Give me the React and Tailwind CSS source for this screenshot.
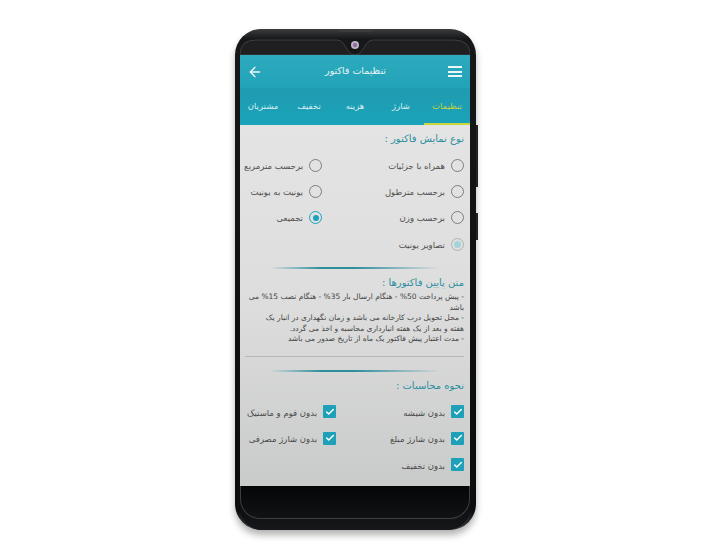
import React from "react";
import { ArrowLeft, Check } from "lucide-react";

const tabs = ["تنظیمات", "شارژ", "هزینه", "تخفیف", "مشتریان"];

const radios = [
  { label: "همراه با جزئیات" },
  { label: "برحسب مترمربع" },
  { label: "برحسب مترطول" },
  { label: "یونیت به یونیت" },
  { label: "برحسب وزن" },
  { label: "تجمیعی", checked: true },
  { label: "تصاویر یونیت", disabled: true },
];

const checks = [
  "بدون شیشه",
  "بدون فوم و ماستیک",
  "بدون شارژ مبلغ",
  "بدون شارژ مصرفی",
  "بدون تخفیف",
];

function Radio({ label, checked, disabled }) {
  return (
    <div className="flex h-[26.3px] items-center gap-[6px]">
      <span
        className={
          "flex h-[13px] w-[13px] shrink-0 items-center justify-center rounded-full border-[1.5px] " +
          (checked ? "border-[#1aa3bb]" : disabled ? "border-[#a9b5b6]" : "border-[#7d7f7f]")
        }
      >
        {checked && <span className="h-[6px] w-[6px] rounded-full bg-[#1aa3bb]" />}
        {disabled && <span className="h-[7px] w-[7px] rounded-full bg-[#a6d3db]" />}
      </span>
      <span className="pt-[2px] text-[8.5px] whitespace-nowrap text-[#4f4f4f]">{label}</span>
    </div>
  );
}

function CheckRow({ label }) {
  return (
    <div className="flex h-[26.5px] items-center gap-[6px]">
      <span className="flex h-[13px] w-[13px] shrink-0 items-center justify-center rounded-[1px] bg-[#1ea0b9]">
        <Check size={10} strokeWidth={3.5} className="text-white" />
      </span>
      <span className="pt-[2px] text-[8.5px] whitespace-nowrap text-[#4a4a4a]">{label}</span>
    </div>
  );
}

function Divider() {
  return <div className="mx-auto h-[2px] w-[170px] bg-[linear-gradient(90deg,transparent,#2f8f9f_30%,#2f8f9f_50%,transparent)]" />;
}

export default function App() {
  return (
    <div
      dir="ltr"
      className="h-[560px] w-[720px] overflow-hidden bg-white pt-[29px] pl-[235px] font-['DejaVu_Sans',sans-serif]"
    >
      <div className="relative h-[501px] w-[241px] rounded-[26px] bg-[linear-gradient(180deg,#3a3c3e,#161718_2%,#0b0c0d_96%,#3b3d3e)] px-[5px] shadow-[0_5px_7px_rgba(0,0,0,0.3)]">
        {/* side buttons */}
        <div className="absolute top-[96px] -right-[2px] h-[62px] w-[2px] bg-[#222]" />
        <div className="absolute top-[184px] -right-[2px] h-[27px] w-[2px] bg-[#222]" />
        {/* earpiece */}
        <div className="absolute top-0 left-[102px] h-[3px] w-[38px] rounded-b-[2px] bg-[#3b3b3b]" />

        <div className="flex h-full w-[230px] flex-col">
          {/* top bezel with notch */}
          <div className="relative h-[26px] shrink-0">
            <svg width="230" height="26" viewBox="0 0 230 26" className="absolute inset-0" fill="none">
              <path d="M0 26 L0 24 Q1 11 16 11 L97 11 C106 11 106 26 115 26 C124 26 124 11 133 11 L214 11 Q229 11 230 24 L230 26 Z" fill="#1f1f21" stroke="#44464a" strokeWidth="0.8" />
              <circle cx="115" cy="16" r="4" fill="#bdb8c2" />
              <circle cx="115" cy="16" r="2.2" fill="#8d6fa5" />
            </svg>
          </div>

          {/* app bar */}
          <div dir="rtl" className="flex h-[33px] shrink-0 items-center justify-between bg-[linear-gradient(180deg,#2daabd,#22a3b8)] pr-[8px] pl-[7px] shadow-[0_1px_1px_rgba(0,60,70,0.6)]">
            <div className="flex w-[14px] flex-col gap-[2.5px]">
              <span className="h-[2px] w-[14px] bg-[#eef7f8]" />
              <span className="h-[2px] w-[14px] bg-[#eef7f8]" />
              <span className="h-[2px] w-[14px] bg-[#eef7f8]" />
            </div>
            <span className="text-[9.5px] text-[#e8f4f6]">تنظیمات فاکتور</span>
            <ArrowLeft size={16} strokeWidth={2} className="text-[#eef7f8]" />
          </div>

          {/* tabs */}
          <div dir="rtl" className="grid h-[37px] shrink-0 grid-cols-5 bg-[linear-gradient(180deg,#1f9bb0,#1aa3ba)]">
            {tabs.map((t, i) => (
              <div
                key={t}
                className={
                  "flex items-center justify-center border-b-2 pt-[1px] text-[8.5px] whitespace-nowrap " +
                  (i === 0 ? "border-[#c8d83c] text-[#c4d33f]" : "border-transparent text-[#d9eef2]")
                }
              >
                {t}
              </div>
            ))}
          </div>

          {/* content */}
          <div dir="rtl" className="h-[361px] shrink-0 overflow-hidden bg-[linear-gradient(180deg,#e3e4e3,#dcdddc_50%,#c9cbca)] pr-[6px] pl-[5px]">
            <p className="h-[27px] pt-[6px] text-[10px] text-[#2c8f9f]">نوع نمایش فاکتور :</p>

            <div className="grid grid-cols-[142px_1fr]">
              {radios.map((r) => (
                <Radio key={r.label} {...r} />
              ))}
            </div>

            <div className="pt-[10px]">
              <Divider />
            </div>
            <p className="pt-[7px] text-[10px] leading-[14px] text-[#2c8f9f]">متن پایین فاکتورها :</p>
            <div className="pt-[2px] text-right text-[7.5px] leading-[10.5px] text-[#444]">
              <p>- پیش پرداخت 50% - هنگام ارسال بار 35% - هنگام نصب 15% می باشد</p>
              <p>
                - محل تحویل درب کارخانه می باشد و زمان نگهداری در انبار یک
                <br />
                هفته و بعد از یک هفته انبارداری محاسبه و اخذ می گردد.
              </p>
              <p>- مدت اعتبار پیش فاکتور یک ماه از تاریخ صدور می باشد</p>
            </div>

            <div className="mt-[11px] h-px bg-[#b5b7b6]" />
            <div className="pt-[13px]">
              <Divider />
            </div>
            <p className="pt-[7px] text-[10px] leading-[14px] text-[#2c8f9f]">نحوه محاسبات :</p>

            <div className="grid grid-cols-[128px_1fr] pt-[6px]">
              {checks.map((c) => (
                <CheckRow key={c} label={c} />
              ))}
            </div>
          </div>

          {/* bottom bezel */}
          <div className="relative min-h-0 flex-1 overflow-hidden rounded-b-[22px] bg-[linear-gradient(180deg,#050607,#15171a)]">
            <div className="absolute inset-x-0 bottom-[11px] h-[40px] rounded-b-[20px] border-x border-b border-[#3c3e40]" />
          </div>
        </div>
      </div>
    </div>
  );
}
